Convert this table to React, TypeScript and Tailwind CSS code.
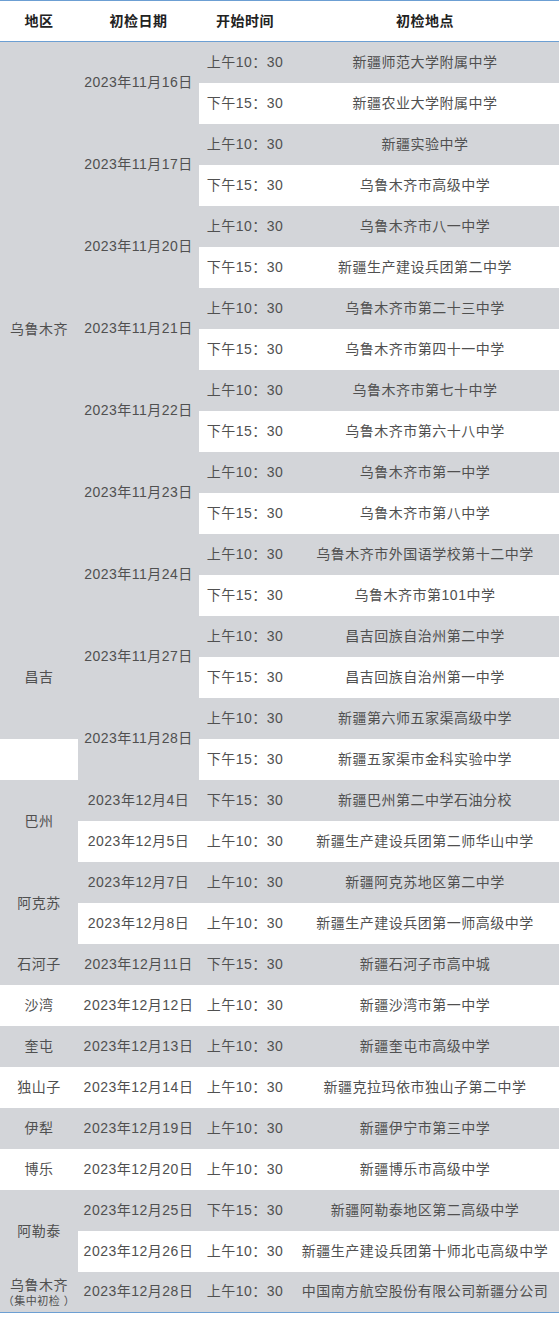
type Row = {
  region?: { text: string; span: number; note?: string };
  date?: { text: string; span: number };
  time: string;
  place: string;
};

const AM = '上午10：30';
const PM = '下午15：30';

const rows: Row[] = [
  { region: { text: '乌鲁木齐', span: 14 }, date: { text: '2023年11月16日', span: 2 }, time: AM, place: '新疆师范大学附属中学' },
  { time: PM, place: '新疆农业大学附属中学' },
  { date: { text: '2023年11月17日', span: 2 }, time: AM, place: '新疆实验中学' },
  { time: PM, place: '乌鲁木齐市高级中学' },
  { date: { text: '2023年11月20日', span: 2 }, time: AM, place: '乌鲁木齐市八一中学' },
  { time: PM, place: '新疆生产建设兵团第二中学' },
  { date: { text: '2023年11月21日', span: 2 }, time: AM, place: '乌鲁木齐市第二十三中学' },
  { time: PM, place: '乌鲁木齐市第四十一中学' },
  { date: { text: '2023年11月22日', span: 2 }, time: AM, place: '乌鲁木齐市第七十中学' },
  { time: PM, place: '乌鲁木齐市第六十八中学' },
  { date: { text: '2023年11月23日', span: 2 }, time: AM, place: '乌鲁木齐市第一中学' },
  { time: PM, place: '乌鲁木齐市第八中学' },
  { date: { text: '2023年11月24日', span: 2 }, time: AM, place: '乌鲁木齐市外国语学校第十二中学' },
  { time: PM, place: '乌鲁木齐市第101中学' },
  { region: { text: '昌吉', span: 3 }, date: { text: '2023年11月27日', span: 2 }, time: AM, place: '昌吉回族自治州第二中学' },
  { time: PM, place: '昌吉回族自治州第一中学' },
  { date: { text: '2023年11月28日', span: 2 }, time: AM, place: '新疆第六师五家渠高级中学' },
  { region: { text: '', span: 1 }, time: PM, place: '新疆五家渠市金科实验中学' },
  { region: { text: '巴州', span: 2 }, date: { text: '2023年12月4日', span: 1 }, time: PM, place: '新疆巴州第二中学石油分校' },
  { date: { text: '2023年12月5日', span: 1 }, time: AM, place: '新疆生产建设兵团第二师华山中学' },
  { region: { text: '阿克苏', span: 2 }, date: { text: '2023年12月7日', span: 1 }, time: AM, place: '新疆阿克苏地区第二中学' },
  { date: { text: '2023年12月8日', span: 1 }, time: AM, place: '新疆生产建设兵团第一师高级中学' },
  { region: { text: '石河子', span: 1 }, date: { text: '2023年12月11日', span: 1 }, time: PM, place: '新疆石河子市高中城' },
  { region: { text: '沙湾', span: 1 }, date: { text: '2023年12月12日', span: 1 }, time: AM, place: '新疆沙湾市第一中学' },
  { region: { text: '奎屯', span: 1 }, date: { text: '2023年12月13日', span: 1 }, time: AM, place: '新疆奎屯市高级中学' },
  { region: { text: '独山子', span: 1 }, date: { text: '2023年12月14日', span: 1 }, time: AM, place: '新疆克拉玛依市独山子第二中学' },
  { region: { text: '伊犁', span: 1 }, date: { text: '2023年12月19日', span: 1 }, time: AM, place: '新疆伊宁市第三中学' },
  { region: { text: '博乐', span: 1 }, date: { text: '2023年12月20日', span: 1 }, time: AM, place: '新疆博乐市高级中学' },
  { region: { text: '阿勒泰', span: 2 }, date: { text: '2023年12月25日', span: 1 }, time: PM, place: '新疆阿勒泰地区第二高级中学' },
  { date: { text: '2023年12月26日', span: 1 }, time: AM, place: '新疆生产建设兵团第十师北屯高级中学' },
  { region: { text: '乌鲁木齐', span: 1, note: '（集中初检 ）' }, date: { text: '2023年12月28日', span: 1 }, time: AM, place: '中国南方航空股份有限公司新疆分公司' },
];

export default function App() {
  return (
    <div className="w-[560px] bg-white font-['Liberation_Sans','Noto_Sans_CJK_SC',sans-serif]">
      <table className="w-[559px] table-fixed border-collapse border-t border-b border-[#6c9fd3] text-[14px] tracking-[0.5px]">
        <colgroup>
          <col className="w-[78px]" />
          <col className="w-[121px]" />
          <col className="w-[92px]" />
          <col className="w-[268px]" />
        </colgroup>
        <thead>
          <tr className="h-[41px] border-b border-[#6c9fd3] text-[#222] font-semibold">
            <th className="text-center">地区</th>
            <th className="text-center">初检日期</th>
            <th className="text-center">开始时间</th>
            <th className="text-center">初检地点</th>
          </tr>
        </thead>
        <tbody className="text-[#505050]">
          {rows.map((r, i) => {
            const bg = i % 2 === 0 ? 'bg-[#d3d5d9]' : 'bg-white';
            return (
              <tr key={i} className="h-[41px]">
                {r.region && (
                  <td rowSpan={r.region.span} className={`${bg} p-0 text-center align-middle leading-[18px]`}>
                    <div>{r.region.text}</div>
                    {r.region.note && <div className="text-[11px] leading-[14px]">{r.region.note}</div>}
                  </td>
                )}
                {r.date && (
                  <td rowSpan={r.date.span} className={`${bg} p-0 text-center align-middle whitespace-nowrap`}>
                    {r.date.text}
                  </td>
                )}
                <td className={`${bg} p-0 text-center align-middle whitespace-nowrap`}>{r.time}</td>
                <td className={`${bg} p-0 text-center align-middle whitespace-nowrap`}>{r.place}</td>
              </tr>
            );
          })}
        </tbody>
      </table>
    </div>
  );
}
